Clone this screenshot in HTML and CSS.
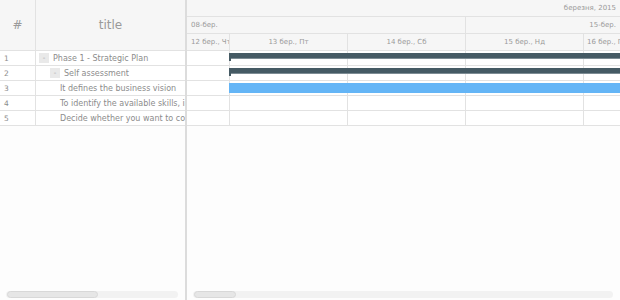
FILE: index.html
```html
<!DOCTYPE html>
<html lang="uk">
<head>
    <meta charset="UTF-8">
    <title>Gantt</title>
    <link rel="stylesheet" href="styles.css">
</head>
<body>
    <div class="gantt">
        <div class="grid-panel">
            <div class="grid-head">
                <div class="col-num">#</div>
                <div class="col-title">title</div>
            </div>
            <div class="grid-row"><div class="col-num">1</div><div class="col-title lvl0"><span class="toggle">-</span>Phase 1 - Strategic Plan</div></div>
            <div class="grid-row"><div class="col-num">2</div><div class="col-title lvl1"><span class="toggle">-</span>Self assessment</div></div>
            <div class="grid-row"><div class="col-num">3</div><div class="col-title lvl2">It defines the business vision</div></div>
            <div class="grid-row"><div class="col-num">4</div><div class="col-title lvl2">To identify the available skills, information and support</div></div>
            <div class="grid-row"><div class="col-num">5</div><div class="col-title lvl2">Decide whether you want to continue</div></div>
            <div class="filler"></div>
            <div class="scroll scroll-left"><div class="thumb"></div></div>
        </div>
        <div class="splitter"></div>
        <div class="timeline">
            <div class="tl-head">
                <div class="band band-month"><span>березня, 2015</span></div>
                <div class="band band-week">
                    <div class="week week-first">08-бер.</div>
                    <div class="week week-next">15-бер.</div>
                </div>
                <div class="band band-day">
                    <div class="day day-part">12 бер., Чт</div>
                    <div class="day">13 бер., Пт</div>
                    <div class="day">14 бер., Сб</div>
                    <div class="day">15 бер., Нд</div>
                    <div class="day day-last">16 бер., Пн</div>
                </div>
            </div>
            <div class="tl-row"><div class="cells"><i></i><i></i><i></i><i></i><i></i></div><div class="bar bar-parent"></div></div>
            <div class="tl-row"><div class="cells"><i></i><i></i><i></i><i></i><i></i></div><div class="bar bar-parent"></div></div>
            <div class="tl-row"><div class="cells"><i></i><i></i><i></i><i></i><i></i></div><div class="bar bar-task"></div></div>
            <div class="tl-row"><div class="cells"><i></i><i></i><i></i><i></i><i></i></div></div>
            <div class="tl-row"><div class="cells"><i></i><i></i><i></i><i></i><i></i></div></div>
            <div class="filler"></div>
            <div class="scroll scroll-right"><div class="thumb"></div></div>
        </div>
    </div>
</body>
</html>
```

FILE: styles.css
```css
body {
    margin: 0;
    font-family: "DejaVu Sans", Verdana, sans-serif;
    color: #8c8c8c;
    background-color: #fdfdfd;
}

.gantt {
    display: flex;
    width: 620px;
    height: 300px;
    overflow: hidden;
}

/* data grid */
.grid-panel {
    width: 185px;
    display: flex;
    flex-direction: column;
    flex-shrink: 0;
}

.grid-head {
    display: flex;
    height: 50px;
    background-color: #f6f6f6;
    border-bottom: 1px solid #e2e2e2;
    color: #9a9a9a;
    font-size: 12px;
}

.grid-head .col-num,
.grid-head .col-title {
    justify-content: center;
}

.grid-head .col-num {
    padding-left: 0;
}

.col-num {
    width: 36px;
    border-right: 1px solid #e2e2e2;
    display: flex;
    align-items: center;
    padding-left: 4px;
    box-sizing: border-box;
}

.col-title {
    flex: 1;
    display: flex;
    align-items: center;
    white-space: nowrap;
    overflow: hidden;
}

.grid-row {
    display: flex;
    height: 14px;
    border-bottom: 1px solid #e2e2e2;
    background-color: #fff;
    font-size: 8px;
}

.grid-row .col-num {
    font-size: 7.5px;
}

.toggle {
    display: inline-flex;
    justify-content: center;
    align-items: center;
    width: 10px;
    height: 10px;
    margin-right: 4px;
    background-color: #e9e9e9;
    font-size: 7px;
    color: #a5a5a5;
}

.lvl0 { padding-left: 3px; }
.lvl1 { padding-left: 14px; }
.lvl2 { padding-left: 24px; }

.filler {
    flex: 1;
    background-color: #fdfdfd;
}

.splitter {
    width: 2px;
    flex-shrink: 0;
    background-color: #dcdcdc;
}

/* timeline */
.timeline {
    flex: 1;
    display: flex;
    flex-direction: column;
    overflow: hidden;
}

.tl-head {
    height: 50px;
    background-color: #f6f6f6;
    border-bottom: 1px solid #e2e2e2;
    font-size: 7px;
    color: #9a9a9a;
}

.band {
    display: flex;
    height: 16px;
    border-bottom: 1px solid #e2e2e2;
    white-space: nowrap;
}

.band-month {
    justify-content: flex-end;
    align-items: center;
    padding-right: 4px;
}

.band-day {
    height: 16px;
    border-bottom: none;
}

.week {
    display: flex;
    align-items: center;
}

.week-first {
    width: 278px;
    padding-left: 4px;
    box-sizing: border-box;
}

.week-next {
    flex: 1;
    justify-content: flex-end;
    padding-right: 4px;
    border-left: 1px solid #e2e2e2;
}

.day {
    width: 118px;
    flex-shrink: 0;
    display: flex;
    align-items: center;
    justify-content: center;
    overflow: hidden;
    box-sizing: border-box;
    border-right: 1px solid #e2e2e2;
}

.day-part {
    width: 43px;
    justify-content: flex-start;
    padding-left: 4px;
}

.day-last {
    width: auto;
    flex: 1;
    justify-content: flex-start;
    padding-left: 3px;
    border-right: none;
}

.tl-row {
    position: relative;
    height: 14px;
    border-bottom: 1px solid #e2e2e2;
    background-color: #fff;
}

.cells {
    display: flex;
    height: 100%;
}

.cells i {
    width: 118px;
    flex-shrink: 0;
    box-sizing: border-box;
    border-right: 1px solid #e2e2e2;
}

.cells i:first-child {
    width: 43px;
}

.bar {
    position: absolute;
    left: 42px;
    right: 0;
}

.bar-parent {
    top: 2px;
    height: 5px;
    background-color: #455a64;
    border-bottom: 1px solid #7d8c94;
}

.bar-parent::before {
    content: "";
    position: absolute;
    left: 0;
    top: 0;
    width: 2px;
    height: 8px;
    background-color: #455a64;
}

.bar-task {
    top: 2px;
    height: 10px;
    background-color: #64b5f6;
}

/* scrollbars */
.scroll {
    height: 7px;
    margin: 0 7px 2px 6px;
    border-radius: 4px;
    background-color: #f2f2f2;
    flex-shrink: 0;
}

.scroll .thumb {
    height: 5px;
    border: 1px solid #d8d8d8;
    border-radius: 4px;
    background-color: #e6e6e6;
}

.scroll-left .thumb {
    width: 89px;
    margin-left: 1px;
}

.scroll-right {
    margin-left: 6px;
}

.scroll-right .thumb {
    width: 40px;
    margin-left: 1px;
}
```
